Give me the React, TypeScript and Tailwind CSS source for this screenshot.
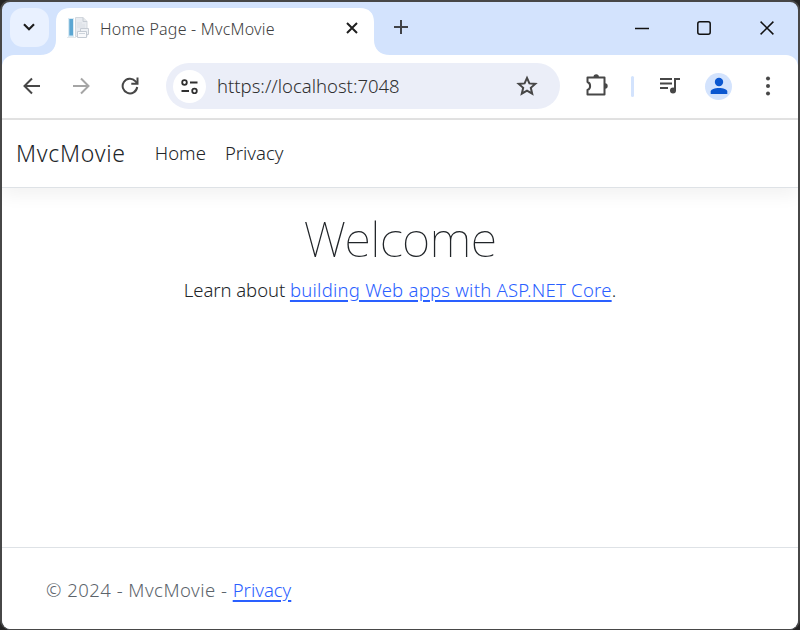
import type { ReactNode } from "react";

function Icon({ w, h, className = "", children }: { w: number; h: number; className?: string; children: ReactNode }) {
  return (
    <svg width={w} height={h} viewBox={`0 0 ${w} ${h}`} fill="none" stroke="currentColor" strokeWidth="2" className={`block shrink-0 ${className}`}>
      {children}
    </svg>
  );
}

function TabStrip() {
  return (
    <div className="flex h-[53px] shrink-0 items-start text-[#1f1f1f]">
      <button className="ml-[8px] mt-[6px] flex h-[39px] w-[39px] items-center justify-center rounded-[13px] bg-[#e9f1ff]">
        <Icon w={12} h={8} className="-mt-px -ml-px"><path d="M1 1.300 6 6.300 11 1.300" strokeWidth="2.200" /></Icon>
      </button>
      <div className="relative ml-[7px] mt-[6px] flex h-[47px] w-[318px] items-start">
        <svg width="350" height="47" viewBox="-16 0 350 47" className="absolute -left-4 top-0">
          <path d="M-16 47C-6 47 0 41 0 32V14C0 5 5 0 14 0H304C313 0 318 5 318 14V32C318 41 324 47 334 47Z" fill="#fff" />
        </svg>
        <div className="relative flex w-full items-center pt-[7px]">
          <svg width="24" height="24" viewBox="0 0 24 24" className="ml-[11px]">
            <path d="M1 2h6v19H1z" fill="#d9eaf4" />
            <path d="M2.300 3h3.700v16.500H2.300z" fill="#5ba6d2" />
            <path d="M8.500 1.500h7.500l4 4v15H8.500z" fill="#e8ebf0" stroke="#d3d8de" />
            <path d="M16 1.500v4h4" fill="#e5e8eb" stroke="#c6ccd4" />
            <path d="M10 9h8M10 11h8M10 7h5" stroke="#d9dee4" />
            <path d="M13.500 12.500h8v6h-8z" fill="#eef1f5" stroke="#c6ccd4" />
            <path d="M10.500 15.500h9v6h-9z" fill="#f8f9fb" stroke="#c3cad3" />
            <path d="M12 17.500h6" stroke="#cdd4dc" />
            <path d="M0 21.500h9" stroke="#e4e8eb" />
          </svg>
          <span className="ml-[9px] whitespace-nowrap pt-[2px] text-[16px] font-light leading-[24px] tracking-[0.220px] text-[#404040]">Home Page - MvcMovie</span>
          <Icon w={12} h={12} className="ml-auto mr-[16px] -mt-px"><path d="M1 1 11 11M11 1 1 11" /></Icon>
        </div>
      </div>
      <Icon w={14} h={14} className="ml-[20px] mt-[18px] text-[#414347]"><path d="M7 0V14M0 7H14" /></Icon>
      <div className="ml-auto mr-[24px] mt-[19px] flex items-center gap-[49px] text-[#111]">
        <Icon w={14} h={14} className="-mr-px"><path d="M0 7.500H14" strokeWidth="1.500" /></Icon>
        <Icon w={14} h={14}><rect x=".8" y=".8" width="12.400" height="12.400" rx="2" strokeWidth="1.500" /></Icon>
        <Icon w={14} h={14}><path d="M.6.6 13.400 13.400M13.400.6.6 13.400" strokeWidth="1.500" /></Icon>
      </div>
    </div>
  );
}

function Toolbar() {
  return (
    <div className="flex h-[65px] shrink-0 items-center rounded-t-[12px] border-b-2 border-[#e2e2e2] bg-white pb-px text-[#474747]">
      <Icon w={18} h={18} className="ml-[21px]"><path d="M17 9H2M9 1.500 1.500 9 9 16.500" /></Icon>
      <Icon w={18} h={18} className="ml-[31px] text-[#a5a5a5]"><path d="M1 9H16M9 1.500 16.500 9 9 16.500" /></Icon>
      <Icon w={18} h={18} className="ml-[31px]">
        <path d="M16.200 10A7.300 7.300 0 1 1 14.300 4.100L16 6" />
        <path d="M16.500.5V6.700H10.300" />
      </Icon>
      <div className="ml-[27px] flex h-[46px] w-[394px] items-center rounded-full bg-[#ebeef8]">
        <div className="ml-[7px] flex h-[33px] w-[33px] items-center justify-center rounded-full bg-white text-[#303030]">
          <Icon w={17} h={15}>
            <circle cx="3.500" cy="3.500" r="2.300" strokeWidth="1.800" /><path d="M9 3.500H16.500M.5 12H8" strokeWidth="1.800" /><circle cx="13.500" cy="12" r="2.300" strokeWidth="1.800" />
          </Icon>
        </div>
        <span className="ml-[11px] whitespace-nowrap text-[18.500px] font-light leading-[28px] text-[#303030]">https://localhost:7048</span>
        <svg width="24" height="24" viewBox="0 0 24 24" className="ml-auto mr-[21px] block" fill="none" stroke="currentColor" strokeWidth="2">
          <path d="M12 3.900 14.400 9.400 20.300 9.900 15.800 13.800 17.200 19.700 12 16.600 6.800 19.700 8.200 13.800 3.700 9.900 9.600 9.400Z" />
        </svg>
      </div>
      <Icon w={24} h={24} className="ml-[25px] -mt-[2px]">
        <path d="M2.500 4.500H19.500V21.500H2.500V17C6 15.700 6 10.300 2.500 9Z" strokeLinejoin="round" />
        <path d="M8.500 4A2.700 2.700 0 0 1 13.900 4ZM20 10.300A2.700 2.700 0 0 1 20 15.700Z" fill="currentColor" stroke="none" />
      </Icon>
      <div className="ml-[22px] h-[21px] w-[3px] rounded-full bg-[#d3e3fd]" />
      <Icon w={24} h={20} className="ml-[24px]">
        <path d="M2 3H14M2 7.500H14M2 12H10M17 15V3H22" />
        <circle cx="15" cy="14.500" r="3" fill="currentColor" stroke="none" />
      </Icon>
      <div className="ml-[23px] flex h-[27px] w-[27px] items-center justify-center rounded-full bg-[#d3e3fd] text-[#0b57d0]">
        <svg width="18" height="18" viewBox="0 0 18 18" fill="currentColor"><circle cx="9" cy="5" r="4.200" /><path d="M.7 17V14.500C.7 9.700 17.300 9.700 17.300 14.500V17Z" /></svg>
      </div>
      <Icon w={6} h={20} className="ml-[33px]">
        <g fill="currentColor" stroke="none"><circle cx="3" cy="2.600" r="2" /><circle cx="3" cy="10" r="2" /><circle cx="3" cy="17.400" r="2" /></g>
      </Icon>
    </div>
  );
}

export default function App() {
  return (
    <div className="h-[630px] w-[800px] bg-[#242424] font-['Noto_Sans','Open_Sans',sans-serif]">
      <div className="flex h-[630px] flex-col overflow-hidden rounded-[10px] border-2 border-b-[1.500px] border-[#474747] bg-[#d3e3fd]">
        <TabStrip />
        <Toolbar />
        <div className="flex min-h-0 flex-1 flex-col bg-white text-[#212529]">
          <nav className="flex h-[68px] shrink-0 items-center border-b border-[#dee2e6] px-[14px] pb-px shadow-[0_8px_16px_rgba(0,0,0,0.05)]">
            <a className="text-[23px] font-light leading-[34px] tracking-[0.750px]">MvcMovie</a>
            <a className="ml-[29px] text-[18.500px] font-light leading-[28px]">Home</a>
            <a className="ml-[19px] text-[18.500px] font-light leading-[28px]">Privacy</a>
          </nav>
          <main className="flex-1 pt-[21px] text-center">
            <h1 className="text-[49px] font-[150] leading-[58px] tracking-[-0.700px]">Welcome</h1>
            <p className="mt-[9px] text-[18.500px] font-light leading-[28px]">
              <span className="tracking-[-0.060px]">Learn about </span><a className="tracking-[0.240px] text-[#2a60ff] underline decoration-[1.500px] underline-offset-[3px]">building Web apps with ASP.NET Core</a>.
            </p>
          </main>
          <footer className="h-[82px] shrink-0 border-t border-[#dee2e6] pl-[44px] pt-[28px] text-[18.500px] font-light leading-[28px] text-[#5c646b]">
            <span className="tracking-[0.480px]">© 2024 - MvcMovie - </span><a className="text-[#2a60ff] underline decoration-[1.500px] underline-offset-[3px]">Privacy</a>
          </footer>
        </div>
      </div>
    </div>
  );
}
